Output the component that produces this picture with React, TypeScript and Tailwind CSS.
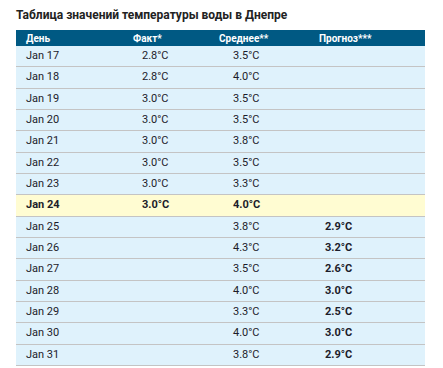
import React from 'react';

type Row = { day: string; fact?: string; avg: string; forecast?: string; today?: boolean };

const rows: Row[] = [
  { day: 'Jan 17', fact: '2.8°C', avg: '3.5°C' },
  { day: 'Jan 18', fact: '2.8°C', avg: '4.0°C' },
  { day: 'Jan 19', fact: '3.0°C', avg: '3.5°C' },
  { day: 'Jan 20', fact: '3.0°C', avg: '3.5°C' },
  { day: 'Jan 21', fact: '3.0°C', avg: '3.8°C' },
  { day: 'Jan 22', fact: '3.0°C', avg: '3.5°C' },
  { day: 'Jan 23', fact: '3.0°C', avg: '3.3°C' },
  { day: 'Jan 24', fact: '3.0°C', avg: '4.0°C', today: true },
  { day: 'Jan 25', avg: '3.8°C', forecast: '2.9°C' },
  { day: 'Jan 26', avg: '4.3°C', forecast: '3.2°C' },
  { day: 'Jan 27', avg: '3.5°C', forecast: '2.6°C' },
  { day: 'Jan 28', avg: '4.0°C', forecast: '3.0°C' },
  { day: 'Jan 29', avg: '3.3°C', forecast: '2.5°C' },
  { day: 'Jan 30', avg: '4.0°C', forecast: '3.0°C' },
  { day: 'Jan 31', avg: '3.8°C', forecast: '2.9°C' },
];

const cols = 'grid grid-cols-[107px_86px_100px_116px]';

export default function App() {
  return (
    <div className="w-[443px] h-[368px] bg-white overflow-hidden font-['Roboto','Liberation_Sans',sans-serif]">
      <div className="px-4 pt-[7px]">
        <h3 className="text-[12px] leading-[17px] font-bold text-[#222] h-[23px]">
          Таблица значений температуры воды в Днепре
        </h3>
        <div className="w-[409px]">
          <div className={`${cols} h-4 bg-[#005983] text-white text-[10px] font-bold items-center`}>
            <div className="pl-[10px]">День</div>
            <div className="pl-[10px]">Факт*</div>
            <div className="pl-[10px]">Среднее**</div>
            <div className="pl-[10px]">Прогноз***</div>
          </div>
          {rows.map(r => (
            <div
              key={r.day}
              className={`${cols} h-[21.33px] items-center border-b border-[#c4c4c4] text-[11px] text-[#1c1c2a] ${r.today ? 'bg-[#fffcd2] font-bold' : 'bg-[#dff2fc]'}`}
            >
              <div className="pl-[10px]">{r.day}</div>
              <div className="pl-[19px]">{r.fact}</div>
              <div className="pl-[24px]">{r.avg}</div>
              <div className="pl-[16px] font-bold">{r.forecast}</div>
            </div>
          ))}
        </div>
      </div>
    </div>
  );
}
